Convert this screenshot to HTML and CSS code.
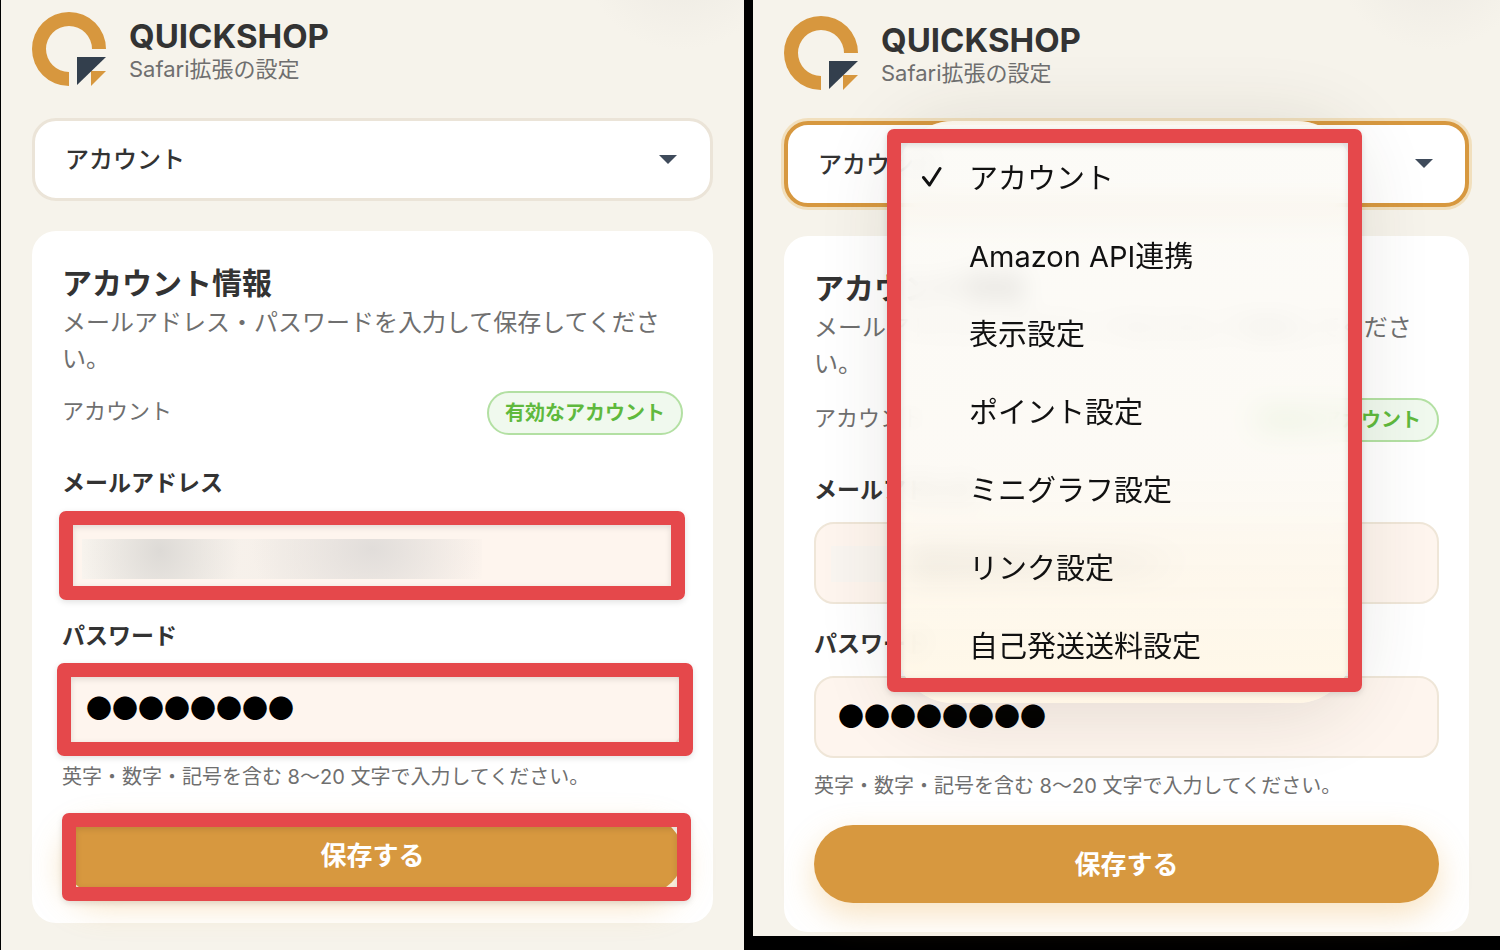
FILE: index.html
```html
<!DOCTYPE html>
<html lang="ja">
<head>
<meta charset="utf-8">
<title>QUICKSHOP Safari拡張の設定</title>
<link rel="stylesheet" href="styles.css">
</head>
<body>
<svg class="defs" aria-hidden="true">
  <symbol id="logo" viewBox="0 0 74 74">
    <path fill="#d7973e" d="M74 37A37 37 0 1 0 37 74V60A23 23 0 1 1 60 37Z"/>
    <path fill="#d7973e" d="M59 59H74L59 74Z"/>
    <path fill="#333f4d" d="M45 45H74L45 73Z"/>
  </symbol>
  <symbol id="caret" viewBox="0 0 18 10"><path fill="#3f4b5b" d="M0 0H18L9 9Z"/></symbol>
</svg>
<div class="board">
  <main class="pane">
    <header class="brand">
      <svg class="logo" role="img" aria-label="QUICKSHOP"><use href="#logo"/></svg>
      <div class="brand-text">
        <h1 class="brand-name">QUICKSHOP</h1>
        <p class="brand-sub">Safari拡張の設定</p>
      </div>
    </header>
    <div class="picker">
      <select class="select" aria-label="設定の種類"><option>アカウント</option></select>
      <svg class="caret" aria-hidden="true"><use href="#caret"/></svg>
    </div>
    <form class="card">
      <h2 class="card-title">アカウント情報</h2>
      <p class="card-desc">メールアドレス・パスワードを入力して保存してくださ<br>い。</p>
      <div class="status"><span>アカウント</span><span class="badge">有効なアカウント</span></div>
      <label class="label" for="mail-a">メールアドレス</label>
      <div class="field">
        <input class="input" id="mail-a" type="text">
        <span class="smudge"></span>
        <span class="frame frame-mail"></span>
      </div>
      <label class="label label-next" for="pass-a">パスワード</label>
      <div class="field">
        <input class="input" id="pass-a" type="text" value="●●●●●●●●">
        <span class="frame frame-pass"></span>
      </div>
      <p class="hint">英字・数字・記号を含む 8〜20 文字で入力してください。</p>
      <div class="field action">
        <button class="save" type="button">保存する</button>
        <span class="frame frame-save"></span>
      </div>
    </form>
  </main>

  <section class="pane pane-open">
    <header class="brand">
      <svg class="logo" role="img" aria-label="QUICKSHOP"><use href="#logo"/></svg>
      <div class="brand-text">
        <h1 class="brand-name">QUICKSHOP</h1>
        <p class="brand-sub">Safari拡張の設定</p>
      </div>
    </header>
    <div class="picker picker-open">
      <select class="select select-focus" aria-label="設定の種類"><option>アカウント</option></select>
      <svg class="caret" aria-hidden="true"><use href="#caret"/></svg>
      <div class="popup">
        <ul class="menu" role="listbox">
          <li class="menu-item" role="option" aria-selected="true">
            <svg class="check" viewBox="0 0 22 22" aria-hidden="true"><path d="M2.500 12.500L8.500 20L19 3.500"/></svg>
            <span>アカウント</span>
          </li>
          <li class="menu-item" role="option">Amazon API連携</li>
          <li class="menu-item" role="option">表示設定</li>
          <li class="menu-item" role="option">ポイント設定</li>
          <li class="menu-item" role="option">ミニグラフ設定</li>
          <li class="menu-item" role="option">リンク設定</li>
          <li class="menu-item" role="option">自己発送送料設定</li>
        </ul>
        <span class="frame frame-menu"></span>
      </div>
    </div>
    <form class="card">
      <h2 class="card-title">アカウント情報</h2>
      <p class="card-desc">メールアドレス・パスワードを入力して保存してくださ<br>い。</p>
      <div class="status"><span>アカウント</span><span class="badge">有効なアカウント</span></div>
      <label class="label" for="mail-b">メールアドレス</label>
      <div class="field">
        <input class="input" id="mail-b" type="text">
        <span class="smudge smudge-under"></span>
      </div>
      <label class="label label-next" for="pass-b">パスワード</label>
      <div class="field"><input class="input" id="pass-b" type="text" value="●●●●●●●●"></div>
      <p class="hint">英字・数字・記号を含む 8〜20 文字で入力してください。</p>
      <div class="field action"><button class="save" type="button">保存する</button></div>
    </form>
  </section>
</div>
</body>
</html>
```
FILE: styles.css
```css
* {
  box-sizing: border-box;
}

body {
  margin: 0;
  background: #000;
  color: #333;
  font-family: Inter, "Noto Sans CJK JP", sans-serif;
}

h1,
h2,
p,
ul {
  margin: 0;
  padding: 0;
}

.defs {
  position: absolute;
  width: 0;
  height: 0;
}

.board {
  display: grid;
  grid-template-columns: 743fr 747fr;
  gap: 9px;
  min-height: 100vh;
  padding-left: 1px;
}

.pane {
  --select-height: 83px;
  --input-height: 81px;
  --status-gap: 14px;
  padding: 12px 31px 27px;
  background: radial-gradient(circle at 680px -50px, #ece9e2 0, #f6f3eb 100px);
}

.pane-open {
  --select-height: 86px;
  --input-height: 82px;
  --status-gap: 16px;
  margin-bottom: 14px;
  padding-top: 16px;
  padding-bottom: 4px;
}

.brand {
  display: flex;
  align-items: center;
  gap: 23px;
}

.logo {
  width: 74px;
  height: 74px;
}

.brand-text {
  padding-top: 4px;
}

.brand-name {
  font-size: 33px;
  font-weight: 700;
  line-height: 36px;
}

.brand-sub {
  color: #6f6f6f;
  font-size: 22px;
  line-height: 30px;
}

.picker {
  position: relative;
  margin-top: 32px;
  margin-bottom: 30px;
}

.picker-open {
  z-index: 1;
  margin-top: 31px;
  margin-bottom: 29px;
}

.select {
  display: block;
  width: 100%;
  height: var(--select-height);
  padding: 0 30px;
  appearance: none;
  border: 3px solid #ebe4d8;
  border-radius: 24px;
  background: #fff;
  color: #333;
  font-family: inherit;
  font-size: 24px;
  font-weight: 500;
}

.select-focus {
  border: 4px solid #d7983f;
  box-shadow: 0 0 0 3px #f1dfbd;
}

.caret {
  position: absolute;
  top: 50%;
  right: 36px;
  width: 18px;
  height: 10px;
  margin-top: -5px;
}

.card {
  padding: 34px 30px 29px;
  border-radius: 24px;
  background: #fff;
}

.card-title {
  margin-bottom: 4px;
  font-size: 30px;
  font-weight: 700;
  line-height: 36px;
}

.card-desc {
  color: #6f6f6f;
  font-size: 24px;
  line-height: 36px;
  white-space: nowrap;
}

.status {
  display: flex;
  align-items: flex-start;
  justify-content: space-between;
  margin-top: var(--status-gap);
  color: #6f6f6f;
  font-size: 22px;
  line-height: 40px;
}

.badge {
  padding: 0 16px;
  border: 2px solid #b3e0a3;
  border-radius: 22px;
  background: #f0f9ee;
  color: #5fb93d;
  font-size: 20px;
  font-weight: 700;
}

.label {
  display: block;
  margin: 32px 0 16px;
  font-size: 23px;
  font-weight: 700;
  line-height: 32px;
}

.label-next {
  margin-top: 24px;
}

.field {
  position: relative;
}

.input {
  display: block;
  width: 100%;
  height: var(--input-height);
  padding: 0 22px 5px;
  border: 2px solid #efe6d8;
  border-radius: 20px;
  background: #fef5ee;
  color: #000;
  font-family: "Noto Sans CJK JP", sans-serif;
  font-size: 26px;
}

.smudge {
  position: absolute;
  top: 24px;
  left: 20px;
  width: 400px;
  height: 40px;
  background:
    radial-gradient(ellipse 80px 90px at 78px 12px, #dddad6, rgba(221, 218, 214, 0)),
    radial-gradient(ellipse 120px 90px at 290px 10px, #e1ddda, rgba(225, 221, 218, 0)),
    linear-gradient(90deg, #f8f4ee, #f6f0ea 50%, #fef5ee);
}

.smudge-under {
  left: 17px;
  width: 360px;
  height: 36px;
  background: linear-gradient(90deg, #f9f5f0 75px, #aaa49e 85px, #d0cac3 300px, #fef5ee);
}

.hint {
  margin-top: 14px;
  color: #6f6f6f;
  font-size: 20px;
  line-height: 28px;
}

.action {
  margin-top: 25px;
}

.save {
  display: block;
  width: 100%;
  height: 78px;
  padding: 0 0 4px;
  border: 0;
  border-radius: 39px;
  background: #d7983f;
  box-shadow: 0 12px 32px rgba(235, 175, 80, 0.35);
  color: #fff;
  font-family: inherit;
  font-size: 26px;
  font-weight: 700;
}

.frame {
  position: absolute;
  border: 14px solid #e5484b;
  border-radius: 7px;
  box-shadow: 0 2px 6px rgba(0, 0, 0, 0.12), inset 0 2px 6px rgba(0, 0, 0, 0.12);
  pointer-events: none;
}

.frame-mail {
  inset: -4px -2px -4px -3px;
}

.frame-pass {
  inset: -5px -10px -7px -5px;
}

.frame-save {
  inset: -3px -8px -7px 0;
}

.frame-menu {
  inset: 8px -9px 11px -10px;
}

.popup {
  position: absolute;
  top: 0;
  left: 113px;
  right: 116px;
}

.menu {
  padding: 16px 0 20px;
  border-radius: 56px;
  background: linear-gradient(rgba(251, 250, 246, 0.86), rgba(252, 249, 243, 0.86) 60%, rgba(255, 246, 228, 0.9));
  box-shadow: 0 8px 80px rgba(60, 50, 30, 0.14);
  backdrop-filter: blur(12px);
  color: #111;
  font-size: 29px;
  list-style: none;
}

.menu-item {
  display: flex;
  align-items: center;
  height: 78px;
  padding-left: 72px;
}

.check {
  width: 22px;
  height: 22px;
  margin-left: -48px;
  margin-right: 26px;
  fill: none;
  stroke: #111;
  stroke-width: 3;
  stroke-linecap: round;
  stroke-linejoin: round;
}
```
